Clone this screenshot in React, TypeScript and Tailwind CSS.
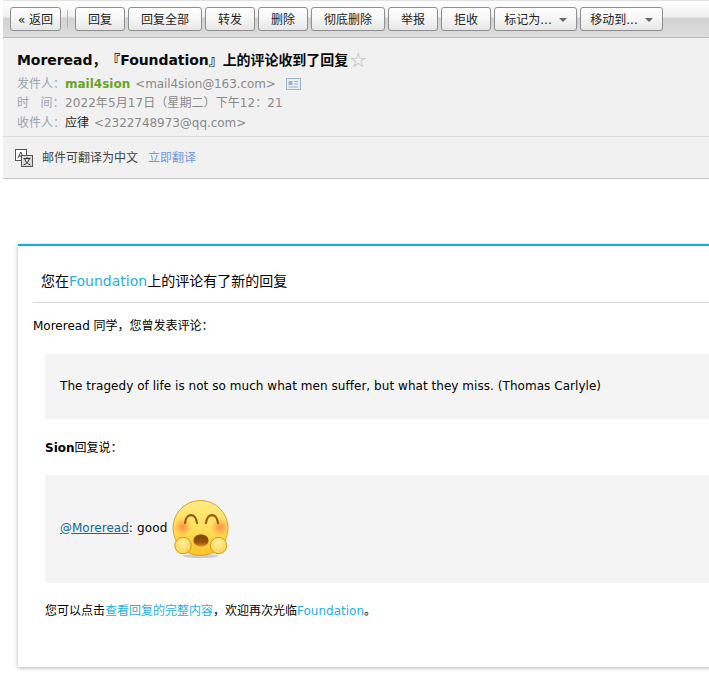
const font = { cjk: "font-['DejaVu_Sans','Noto_Sans_CJK_SC',sans-serif] [text-spacing-trim:space-all]" }

const ToolButton = ({ label, width, arrow }: { label: string; width: string; arrow?: boolean }) => (
    <button className={`${width} h-6 pt-px shrink-0 flex items-center justify-center gap-[7px] rounded-[3px] border border-[#8f8f8f] bg-gradient-to-b from-white via-[#f6f6f6] to-[#e6e6e6] text-xs text-[#222]`}>
        <span>{label}</span>
        {arrow && <span className="w-0 h-0 border-x-[4px] border-x-transparent border-t-[4px] border-t-[#666]" />}
    </button>
)

const MetaRow = ({ label, children }: { label: string; children: React.ReactNode }) => (
    <div className="flex items-center h-[19.5px] text-xs whitespace-pre">
        <span className="w-[48px] text-[#9aa5b1]">{label}</span>
        {children}
    </div>
)

const Emoji = () => (
    <svg width="60" height="62" viewBox="0 0 60 62" className="shrink-0">
        <defs>
            <linearGradient id="face" x1="0" y1="0" x2="0" y2="1">
                <stop offset="0" stopColor="#ffeb85" />
                <stop offset="0.5" stopColor="#ffe05a" />
                <stop offset="1" stopColor="#fdc22a" />
            </linearGradient>
            <linearGradient id="mouth" x1="0" y1="0" x2="0" y2="1">
                <stop offset="0" stopColor="#7d4205" />
                <stop offset="0.65" stopColor="#96540a" />
                <stop offset="1" stopColor="#e0921f" />
            </linearGradient>
            <radialGradient id="blush">
                <stop offset="0" stopColor="#ff8a45" stopOpacity="0.95" />
                <stop offset="1" stopColor="#ff8a45" stopOpacity="0" />
            </radialGradient>
            <radialGradient id="hand" cx="0.5" cy="0.35">
                <stop offset="0" stopColor="#fff0a0" />
                <stop offset="1" stopColor="#ffd85c" />
            </radialGradient>
        </defs>
        <ellipse cx="29.5" cy="58" rx="18" ry="2" fill="#000" opacity="0.16" />
        <circle cx="29.5" cy="30" r="27.5" fill="url(#face)" stroke="#d9a526" strokeWidth="1" />
        <circle cx="11.5" cy="29" r="9" fill="url(#blush)" />
        <circle cx="49" cy="29" r="9" fill="url(#blush)" />
        <path d="M14 25 C15 14.5 25 14.5 26 25" fill="none" stroke="#95560a" strokeWidth="2.2" strokeLinecap="round" />
        <path d="M35 25 C36 14.5 46 14.5 47 25" fill="none" stroke="#95560a" strokeWidth="2.2" strokeLinecap="round" />
        <path d="M22.5 42.5 C22.5 34.5 37.5 34.5 37.5 42.5 C37.5 46.5 33.5 48.5 30 48.5 C26.5 48.5 22.5 46.5 22.5 42.5 Z" fill="url(#mouth)" />
        <circle cx="12" cy="47.5" r="8.2" fill="url(#hand)" stroke="#c79a25" strokeWidth="1" />
        <circle cx="47.5" cy="47.5" r="8.2" fill="url(#hand)" stroke="#c79a25" strokeWidth="1" />
    </svg>
)

const TranslateIcon = () => (
    <svg width="18" height="18" viewBox="0 0 18 18">
        <rect x="0.5" y="0.5" width="11" height="11" fill="#fff" stroke="#555" />
        <path d="M3 9 L5.8 3 L8.5 9 M4 7 H7.5" fill="none" stroke="#444" strokeWidth="1" />
        <rect x="6.5" y="6.5" width="11" height="11" fill="#ddd" stroke="#555" />
        <path d="M8.5 9.5 H15.5 M12 8 V9.5 M9.5 9.5 C10.5 13 13 15 15.5 16 M14.5 9.5 C13.5 13 11 15 8.5 16" fill="none" stroke="#333" strokeWidth="1" />
    </svg>
)

const App = () => {
    return (
        <div className={`w-[709px] h-[685px] overflow-hidden bg-white text-black ${font.cjk}`}>
            <div className="ml-[3px]">
                <div className="h-px bg-[#e2e2e2]" />
                <div className="h-[37px] flex items-start pt-[6px] pl-[7px] gap-[3px] border-b border-[#b9b9b9] bg-[linear-gradient(to_bottom,#ffffff_0,#f0f0f0_16px,#d3d3d3_17px,#dcdcdc_100%)]">
                    <ToolButton label="« 返回" width="w-[51px]" />
                    <div className="w-px h-[18px] mt-[3px] ml-[3px] mr-[4px] bg-[#b5b5b5]" />
                    <ToolButton label="回复" width="w-[50px]" />
                    <ToolButton label="回复全部" width="w-[74px]" />
                    <ToolButton label="转发" width="w-[50px]" />
                    <ToolButton label="删除" width="w-[50px]" />
                    <ToolButton label="彻底删除" width="w-[74px]" />
                    <ToolButton label="举报" width="w-[50px]" />
                    <ToolButton label="拒收" width="w-[50px]" />
                    <ToolButton label="标记为..." width="w-[83px]" arrow />
                    <ToolButton label="移动到..." width="w-[83px]" arrow />
                </div>
                <div className="bg-[#f1f1f1] border-b border-[#c4c4c4]">
                    <div className="h-[99px] pl-[14px] pt-[11px] border-b border-[#dcdcdc]">
                        <div className="flex items-center h-[22px] text-sm font-bold text-[#0a0a0a] whitespace-pre">
                            <span className="tracking-[-0.06px]">Moreread，『Foundation』上的评论收到了回复</span>
                            <span className="ml-px text-[20px] font-normal leading-none text-[#b4b4b4]">☆</span>
                        </div>
                        <div className="mt-[3px]">
                            <MetaRow label="发件人：">
                                <span className="font-bold text-[#6aa51e]">mail4sion</span>
                                <span className="ml-[5px] text-[#8a8a8a] tracking-[-0.1px]">&lt;mail4sion@163.com&gt;</span>
                                <svg width="15" height="12" viewBox="0 0 15 12" className="ml-[10px]">
                                    <rect x="0.5" y="0.5" width="14" height="11" fill="#e8eef4" stroke="#9db4cc" />
                                    <rect x="2.5" y="3" width="4" height="4" fill="#9db4cc" />
                                    <path d="M2.5 9 H12 M8 3.5 H12 M8 6 H12" stroke="#9db4cc" />
                                </svg>
                            </MetaRow>
                            <MetaRow label="时   间：">
                                <span className="text-[#8a8a8a] tracking-[0.08px]">2022年5月17日（星期二）下午12：21</span>
                            </MetaRow>
                            <MetaRow label="收件人：">
                                <span className="text-[#222]">应律</span>
                                <span className="ml-[5px] text-[#8a8a8a] tracking-[-0.05px]">&lt;2322748973@qq.com&gt;</span>
                            </MetaRow>
                        </div>
                    </div>
                    <div className="h-[41px] flex items-center pl-3 text-xs">
                        <TranslateIcon />
                        <span className="ml-[9px] text-[#444]">邮件可翻译为中文</span>
                        <span className="ml-[10px] text-[#6c9bdc]">立即翻译</span>
                    </div>
                </div>
            </div>

            <div className="mt-[65px] ml-[18px] w-[800px] h-[423px] border-t-2 border-[#12aedb] bg-white shadow-[0_1px_4px_rgba(0,0,0,0.3)] pl-[15px] text-xs">
                <div className="h-[57px] pl-2 flex items-center pt-[13px] border-b border-[#dddddd] text-sm">
                    <span>您在</span>
                    <span className="text-[#27aee0]">Foundation</span>
                    <span>上的评论有了新的回复</span>
                </div>
                <p className="mt-[15px] leading-[16px]">Moreread 同学，您曾发表评论：</p>
                <div className="ml-3 mt-[20px] h-[65px] bg-[#f4f4f4] flex items-center pl-[15px] pb-[2px] tracking-[0.045px]">
                    The tragedy of life is not so much what men suffer, but what they miss. (Thomas Carlyle)
                </div>
                <p className="ml-3 mt-[21px] leading-[16px]"><b>Sion</b>回复说：</p>
                <div className="ml-3 mt-[19px] h-[108px] bg-[#f4f4f4] flex items-center pl-[15px]">
                    <span className="underline text-[#0f6a9a] mb-[3px]">@Moreread</span>
                    <span className="whitespace-pre mb-[3px] tracking-[0.15px]">: good </span>
                    <Emoji />
                </div>
                <p className="ml-3 mt-5 leading-[16px]">
                    您可以点击<span className="text-[#27aee0]">查看回复的完整内容</span>，欢迎再次光临<span className="text-[#27aee0]">Foundation</span>。
                </p>
            </div>
        </div>
    )
}

export default App
